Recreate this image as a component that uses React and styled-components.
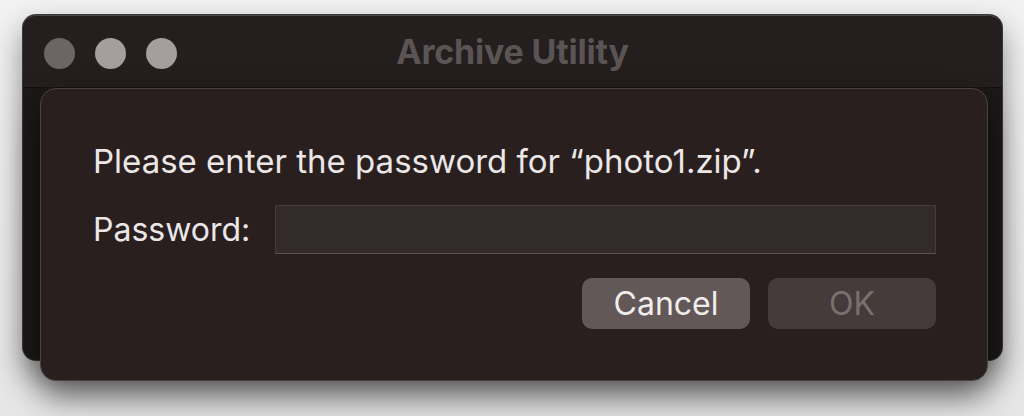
import styled, { createGlobalStyle } from 'styled-components';

const GlobalStyle = createGlobalStyle`
html, body {
    margin: 0;
    padding: 0;
    background: #ececec;
    font-family: Inter, "Liberation Sans", sans-serif;
}
#root {
    width: 1024px;
    height: 416px;
    overflow: hidden;
}
`;

const Page = styled.div`
width: 1024px;
height: 416px;
box-sizing: border-box;
padding: 15px 22px 0 23px;
background: linear-gradient(#f2f2f2, #e6e6e6);
`;

const Window = styled.div`
width: 979px;
height: 345px;
display: flex;
flex-direction: column;
background: #1c1818;
border-radius: 13px;
box-shadow: 0 0 0 1px #3d3838, 0 14px 30px rgba(0, 0, 0, 0.45);
`;

const TitleBar = styled.div`
height: 73px;
flex-shrink: 0;
display: grid;
grid-template-columns: 1fr auto 1fr;
align-items: center;
padding: 3px 21px 0 21px;
box-sizing: border-box;
background: #241e1e;
border-radius: 13px 13px 0 0;
border-top: 1px solid #4a4545;
border-bottom: 1px solid #141111;
`;

const Lights = styled.div`
display: flex;
gap: 20px;
`;

const Light = styled.span`
width: 31px;
height: 31px;
border-radius: 50%;
background: ${p => (p.$dim ? '#6b6566' : '#a49e9f')};
`;

const Title = styled.div`
font-size: 34px;
font-weight: 700;
color: #5b5455;
letter-spacing: -0.2px;
margin-top: -4px;
`;

const Body = styled.div`
flex: 1;
padding: 0 14px 0 17px;
`;

const Sheet = styled.div`
height: 293px;
box-sizing: border-box;
padding: 52px 51px 0 52px;
display: flex;
flex-direction: column;
background: #2a1f1f;
border-radius: 16px;
border: 1px solid #4a4242;
box-shadow: 0 16px 32px rgba(0, 0, 0, 0.55);
`;

const Message = styled.p`
margin: 0;
font-size: 33px;
color: #ebe7e7;
line-height: 40px;
`;

const FieldRow = styled.div`
display: flex;
align-items: center;
margin-top: 24px;
`;

const Label = styled.label`
font-size: 32px;
color: #ebe7e7;
width: 182px;
flex-shrink: 0;
`;

const Input = styled.input`
flex: 1;
height: 49px;
box-sizing: border-box;
background: #332a2a;
border: 1px solid #443c3c;
border-bottom-color: #5a5252;
outline: none;
color: #ebe7e7;
font-size: 22px;
padding: 0 8px;
`;

const Buttons = styled.div`
display: flex;
justify-content: flex-end;
gap: 18px;
margin-top: 24px;
`;

const Button = styled.button`
width: 168px;
height: 51px;
border: none;
border-radius: 10px;
font-family: inherit;
font-size: 32px;
padding: 0;
background: ${p => (p.$primary ? '#625857' : '#453b3b')};
color: ${p => (p.$primary ? '#f1eded' : '#7a706f')};
cursor: pointer;
`;

export default function App() {
    return (
        <>
            <GlobalStyle />
            <Page>
                <Window>
                    <TitleBar>
                        <Lights>
                            <Light $dim />
                            <Light />
                            <Light />
                        </Lights>
                        <Title>Archive Utility</Title>
                        <div />
                    </TitleBar>
                    <Body>
                        <Sheet>
                            <Message>Please enter the password for “photo1.zip”.</Message>
                            <FieldRow>
                                <Label>Password:</Label>
                                <Input type="password" />
                            </FieldRow>
                            <Buttons>
                                <Button $primary>Cancel</Button>
                                <Button disabled>OK</Button>
                            </Buttons>
                        </Sheet>
                    </Body>
                </Window>
            </Page>
        </>
    );
}
